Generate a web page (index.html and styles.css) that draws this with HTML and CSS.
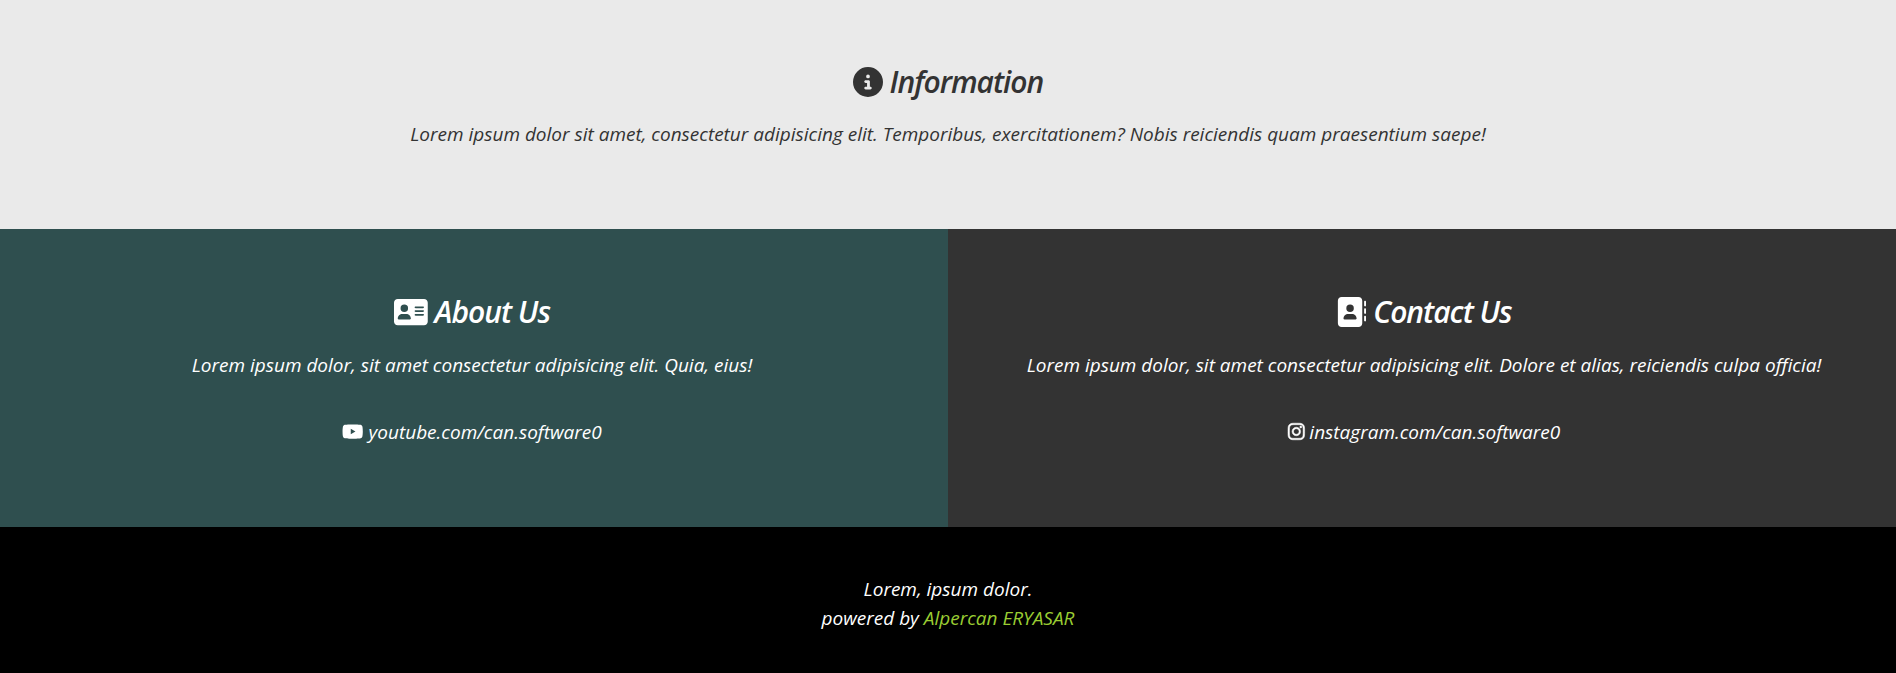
FILE: index.html
```html
<!DOCTYPE html>
<html lang="en">
<head>
<meta charset="utf-8">
<title>Information</title>
<link rel="stylesheet" href="styles.css">
</head>
<body>
<section class="info">
  <h2 class="title"><svg class="icon" viewBox="0 0 512 512" aria-hidden="true"><path d="M256 512A256 256 0 1 0 256 0a256 256 0 1 0 0 512zM216 336h24V272H216c-13.300 0-24-10.700-24-24s10.700-24 24-24h48c13.300 0 24 10.700 24 24v88h8c13.300 0 24 10.700 24 24s-10.700 24-24 24H216c-13.300 0-24-10.700-24-24s10.700-24 24-24zm40-208a32 32 0 1 1 0 64 32 32 0 1 1 0-64z"/></svg> Information</h2>
  <p class="text">Lorem ipsum dolor sit amet, consectetur adipisicing elit. Temporibus, exercitationem? Nobis reiciendis quam praesentium saepe!</p>
</section>
<div class="columns">
  <section class="about">
    <h2 class="title"><svg class="icon icon-card" viewBox="0 0 576 512" aria-hidden="true"><path fill-rule="evenodd" d="M64 32C28.700 32 0 60.700 0 96V416c0 35.300 28.700 64 64 64H512c35.300 0 64-28.700 64-64V96c0-35.300-28.700-64-64-64H64zm80 256h64c44.200 0 80 35.800 80 80 0 8.800-7.200 16-16 16H80c-8.800 0-16-7.200-16-16 0-44.200 35.800-80 80-80zm-32-96a64 64 0 1 1 128 0 64 64 0 1 1-128 0zm256-32H496c8.800 0 16 7.200 16 16s-7.200 16-16 16H368c-8.800 0-16-7.200-16-16s7.200-16 16-16zm0 64H496c8.800 0 16 7.200 16 16s-7.200 16-16 16H368c-8.800 0-16-7.200-16-16s7.200-16 16-16zm0 64H496c8.800 0 16 7.200 16 16s-7.200 16-16 16H368c-8.800 0-16-7.200-16-16s7.200-16 16-16z"/></svg> About Us</h2>
    <p class="text">Lorem ipsum dolor, sit amet consectetur adipisicing elit. Quia, eius!</p>
    <a class="social" href="https://youtube.com/can.software0"><svg class="icon icon-card" viewBox="0 0 576 512" aria-hidden="true"><path d="M549.655 124.083c-6.281-23.650-24.787-42.276-48.284-48.597C458.781 64 288 64 288 64S117.220 64 74.629 75.486c-23.497 6.322-42.003 24.947-48.284 48.597-11.412 42.867-11.412 132.305-11.412 132.305s0 89.438 11.412 132.305c6.281 23.650 24.787 41.500 48.284 47.821C117.220 448 288 448 288 448s170.780 0 213.371-11.486c23.497-6.321 42.003-24.171 48.284-47.821 11.412-42.867 11.412-132.305 11.412-132.305s0-89.438-11.412-132.305zM236 328V184l126 72z"/></svg> youtube.com/can.software0</a>
  </section>
  <section class="contact">
    <h2 class="title"><svg class="icon" viewBox="0 0 512 512" aria-hidden="true"><path fill-rule="evenodd" d="M96 0C60.700 0 32 28.700 32 64V448c0 35.300 28.700 64 64 64H384c35.300 0 64-28.700 64-64V64c0-35.300-28.700-64-64-64H96zM208 288h64c44.200 0 80 35.800 80 80 0 8.800-7.200 16-16 16H144c-8.800 0-16-7.200-16-16 0-44.200 35.800-80 80-80zm-32-96a64 64 0 1 1 128 0 64 64 0 1 1-128 0z"/><path d="M480 80c0-8.800 7.200-16 16-16s16 7.200 16 16v64c0 8.800-7.200 16-16 16s-16-7.200-16-16zM480 208c0-8.800 7.200-16 16-16s16 7.200 16 16v64c0 8.800-7.200 16-16 16s-16-7.200-16-16zM480 336c0-8.800 7.200-16 16-16s16 7.200 16 16v64c0 8.800-7.200 16-16 16s-16-7.200-16-16z"/></svg> Contact Us</h2>
    <p class="text">Lorem ipsum dolor, sit amet consectetur adipisicing elit. Dolore et alias, reiciendis culpa officia!</p>
    <a class="social" href="https://instagram.com/can.software0"><svg class="icon icon-insta" viewBox="0 0 448 512" aria-hidden="true"><path d="M224.100 141c-63.600 0-114.900 51.300-114.900 114.900s51.300 114.900 114.900 114.900S339 319.500 339 255.900 287.700 141 224.100 141zm0 189.600c-41.100 0-74.700-33.500-74.700-74.700s33.500-74.700 74.700-74.700 74.700 33.500 74.700 74.700-33.600 74.700-74.700 74.700zm146.400-194.300c0 14.900-12 26.800-26.800 26.800-14.900 0-26.800-12-26.800-26.800s12-26.800 26.800-26.800 26.800 12 26.800 26.800zm76.100 27.200c-1.700-35.900-9.900-67.700-36.200-93.900-26.200-26.200-58-34.400-93.900-36.200-37-2.100-147.900-2.100-184.900 0-35.800 1.700-67.600 9.900-93.900 36.100s-34.400 58-36.200 93.900c-2.100 37-2.100 147.900 0 184.900 1.700 35.900 9.900 67.700 36.200 93.900s58 34.400 93.900 36.200c37 2.100 147.900 2.100 184.900 0 35.900-1.700 67.700-9.900 93.900-36.200 26.200-26.200 34.400-58 36.200-93.900 2.100-37 2.100-147.800 0-184.800zM398.800 388c-7.800 19.600-22.900 34.700-42.600 42.600-29.500 11.700-99.500 9-132.100 9s-102.700 2.600-132.100-9c-19.600-7.800-34.700-22.900-42.600-42.600-11.700-29.500-9-99.500-9-132.100s-2.600-102.700 9-132.100c7.800-19.600 22.900-34.700 42.600-42.600 29.500-11.700 99.500-9 132.100-9s102.700-2.600 132.100 9c19.600 7.800 34.700 22.900 42.600 42.600 11.700 29.500 9 99.500 9 132.100s2.700 102.700-9 132.100z"/></svg> instagram.com/can.software0</a>
  </section>
</div>
<footer class="footer">
  <p>Lorem, ipsum dolor.</p>
  <p>powered by <a class="author" href="#">Alpercan ERYASAR</a></p>
</footer>
</body>
</html>
```
FILE: styles.css
```css
* { box-sizing: border-box; }
body {
  margin: 0;
  background: #000;
  color: #fff;
  font-family: "Open Sans", sans-serif;
  font-size: 19px;
  font-style: italic;
  line-height: 29px;
  text-align: center;
}
p, h2 { margin: 0; }
.info, .about, .contact { padding: 60px 32px 80px; }
.info { background: #eaeaea; color: #333; }
.columns { display: grid; grid-template-columns: 1fr 1fr; }
.about { background: #2f4f4f; padding-right: 36px; }
.contact { background: #333; padding-left: 36px; }
.title {
  margin-bottom: 16px;
  font-size: 30px;
  font-weight: 600;
  line-height: 44px;
  letter-spacing: -1px;
}
.columns .title { line-height: 46px; }
.icon {
  display: inline-block;
  width: 1em;
  height: 1em;
  fill: currentColor;
  vertical-align: -0.125em;
}
.icon-card { width: 1.125em; }
.icon-insta {
  width: 0.875em;
  overflow: visible;
  stroke: currentColor;
  stroke-width: 14;
}
.social {
  display: inline-block;
  margin-top: 38px;
  color: inherit;
  text-decoration: none;
}
.footer { padding: 48px 32px 40px; }
.author { color: #9acd32; text-decoration: none; }
```
